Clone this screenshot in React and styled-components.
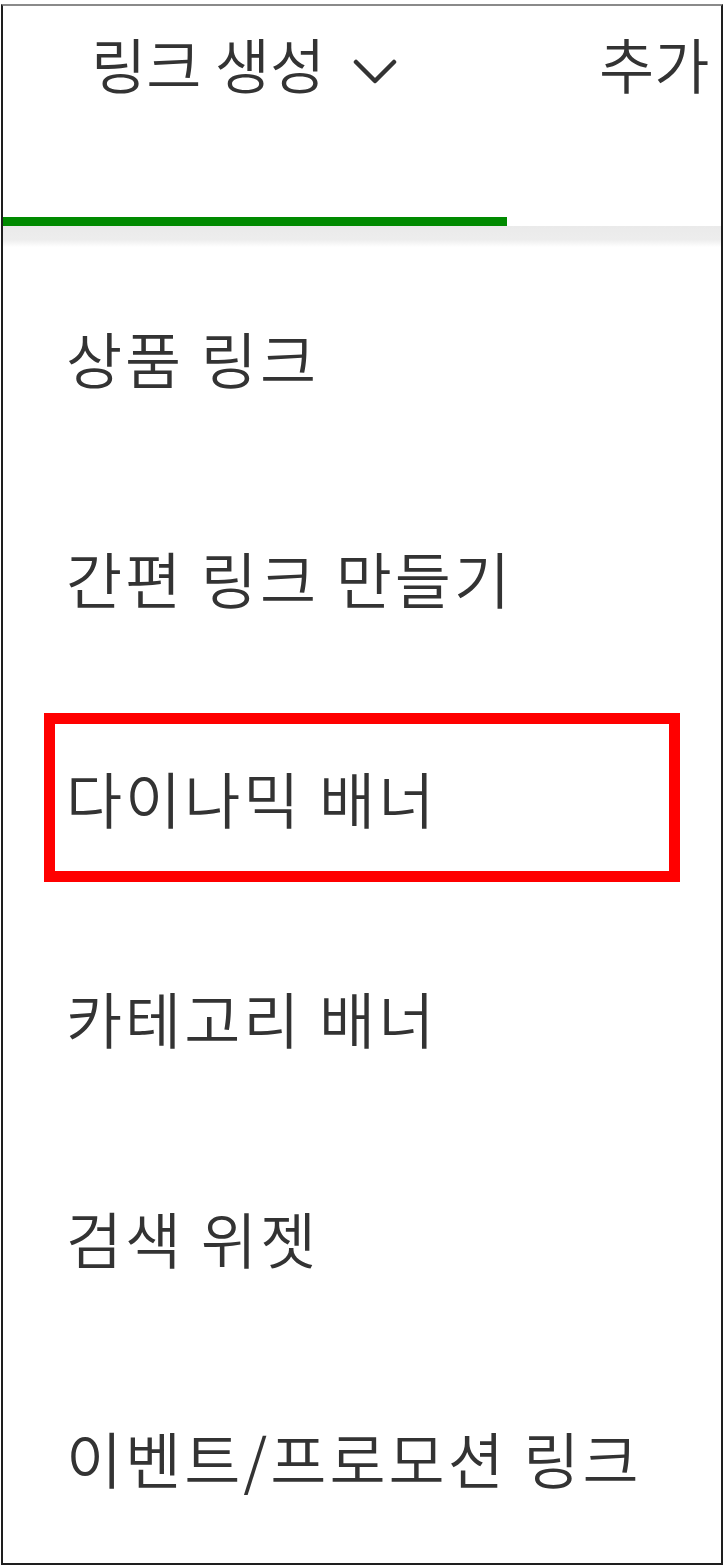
import React from "react";
import styled, { createGlobalStyle } from "styled-components";

const Global = createGlobalStyle`
  html, body { margin: 0; padding: 0; background: #fff; }
  * { box-sizing: border-box; }
`;

const Frame = styled.div`
  margin: 4px 0 0 1px;
  width: 722px;
  height: 1561px;
  border: 2px solid #1e1e1e;
  border-top-color: #8a8a8a;
  overflow: hidden;
  font-family: "Noto Sans CJK KR", "Noto Sans", sans-serif;
  font-weight: 350;
  color: #333;
  display: flex;
  flex-direction: column;
`;

const TabBar = styled.div`
  display: flex;
  align-items: flex-start;
  height: 220px;
  white-space: nowrap;
  flex-shrink: 0;
`;

const Tab = styled.div`
  flex: 0 0 ${(p) => p.$width}px;
  height: 100%;
  display: flex;
  align-items: flex-start;
  padding: 17px 0 0 ${(p) => p.$pad}px;
  font-size: 60px;
  line-height: 80px;
  letter-spacing: 0;
  border-bottom: 9px solid ${(p) => (p.$active ? "#008a00" : "transparent")};
`;

const Chevron = styled.svg`
  width: 44px;
  height: 26px;
  margin: 36px 0 0 28px;
  flex-shrink: 0;
`;

const Band = styled.div`
  height: 21px;
  flex-shrink: 0;
  background: linear-gradient(#eaeaea, #ededed 65%, #fff);
`;

const Menu = styled.ul`
  list-style: none;
  margin: 0;
  padding: 0;
  display: flex;
  flex-direction: column;
`;

const Item = styled.li`
  position: relative;
  height: 220px;
  flex-shrink: 0;
  display: flex;
  align-items: center;
  padding-left: 63px;
  font-size: 61px;
  letter-spacing: 3px;
  white-space: nowrap;
`;

const Highlight = styled.span`
  position: absolute;
  left: 41px;
  right: 41px;
  top: 26px;
  bottom: 25px;
  border: 11px solid #ff0000;
  pointer-events: none;
`;

const items = [
  "상품 링크",
  "간편 링크 만들기",
  "다이나믹 배너",
  "카테고리 배너",
  "검색 위젯",
  "이벤트/프로모션 링크",
];

export default function App() {
  return (
    <>
      <Global />
      <Frame>
        <TabBar>
          <Tab $active $width={504} $pad={88}>
            링크 생성
            <Chevron viewBox="0 0 44 26" fill="none">
              <polyline
                points="3,3 22,22 41,3"
                stroke="#333"
                strokeWidth="4.5"
                strokeLinecap="round"
                strokeLinejoin="round"
              />
            </Chevron>
          </Tab>
          <Tab $width={300} $pad={92}>
            추가
          </Tab>
        </TabBar>
        <Band />
        <Menu>
          {items.map((t, i) => (
            <Item key={t}>
              {t}
              {i === 2 && <Highlight />}
            </Item>
          ))}
        </Menu>
      </Frame>
    </>
  );
}
